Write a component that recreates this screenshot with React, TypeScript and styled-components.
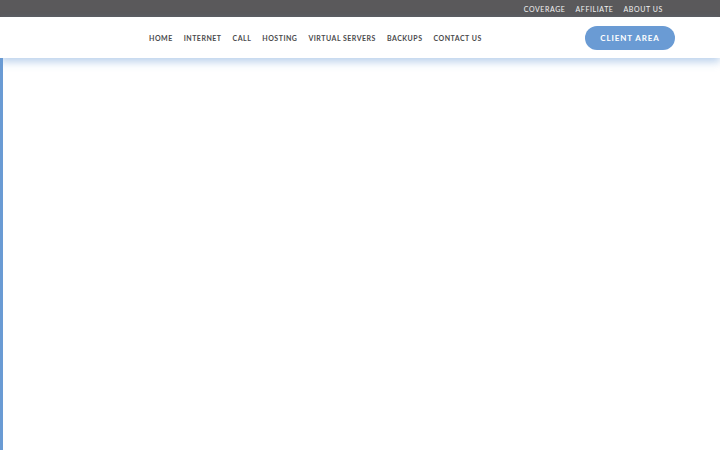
import { FC } from 'react';
import styled, { createGlobalStyle } from 'styled-components';

const GlobalStyle = createGlobalStyle`
    html, body {
        margin: 0;
        padding: 0;
        background: #fff;
        font-family: Lato, "Open Sans", sans-serif;
    }
`;

const Page = styled.div`
    width: 720px;
    height: 450px;
    overflow: hidden;
    display: flex;
    flex-direction: column;
`;

const TopBar = styled.div`
    height: 17px;
    background: #5a595b;
    display: flex;
    justify-content: flex-end;
    align-items: center;
    padding-right: 57px;
    gap: 10px;
`;

const TopLink = styled.a`
    color: #f2f2f2;
    font-size: 7px;
    letter-spacing: 0.6px;
    text-transform: uppercase;
    cursor: pointer;
`;

const Header = styled.header`
    height: 41px;
    background: #fff;
    display: flex;
    align-items: center;
    position: relative;
    z-index: 2;
    box-shadow: 0 4px 8px rgba(106, 155, 212, 0.45);
`;

const Nav = styled.nav`
    display: flex;
    gap: 11px;
    margin-left: 149px;
`;

const NavItem = styled.a`
    color: #4a4a4c;
    font-size: 7px;
    font-weight: 700;
    letter-spacing: 0.5px;
    text-transform: uppercase;
    cursor: pointer;
`;

const ClientButton = styled.button`
    margin-left: auto;
    margin-right: 45px;
    width: 90px;
    height: 24px;
    border: 0;
    border-radius: 12px;
    background: #6a9bd4;
    color: #fff;
    font-family: Lato, sans-serif;
    font-size: 8px;
    font-weight: 700;
    letter-spacing: 0.9px;
    cursor: pointer;
`;

const Body = styled.main`
    flex: 1;
    border-left: 3px solid #6a9bd4;
    background: #fff;
`;

const topLinks = ['Coverage', 'Affiliate', 'About us'];
const navLinks = ['Home', 'Internet', 'Call', 'Hosting', 'Virtual Servers', 'Backups', 'Contact us'];

const App: FC = () => {
    return (
        <Page>
            <GlobalStyle />
            <TopBar>
                {topLinks.map((item) => <TopLink key={item}>{item}</TopLink>)}
            </TopBar>
            <Header>
                <Nav>
                    {navLinks.map((item) => <NavItem key={item}>{item}</NavItem>)}
                </Nav>
                <ClientButton>CLIENT AREA</ClientButton>
            </Header>
            <Body />
        </Page>
    );
};

export default App;
